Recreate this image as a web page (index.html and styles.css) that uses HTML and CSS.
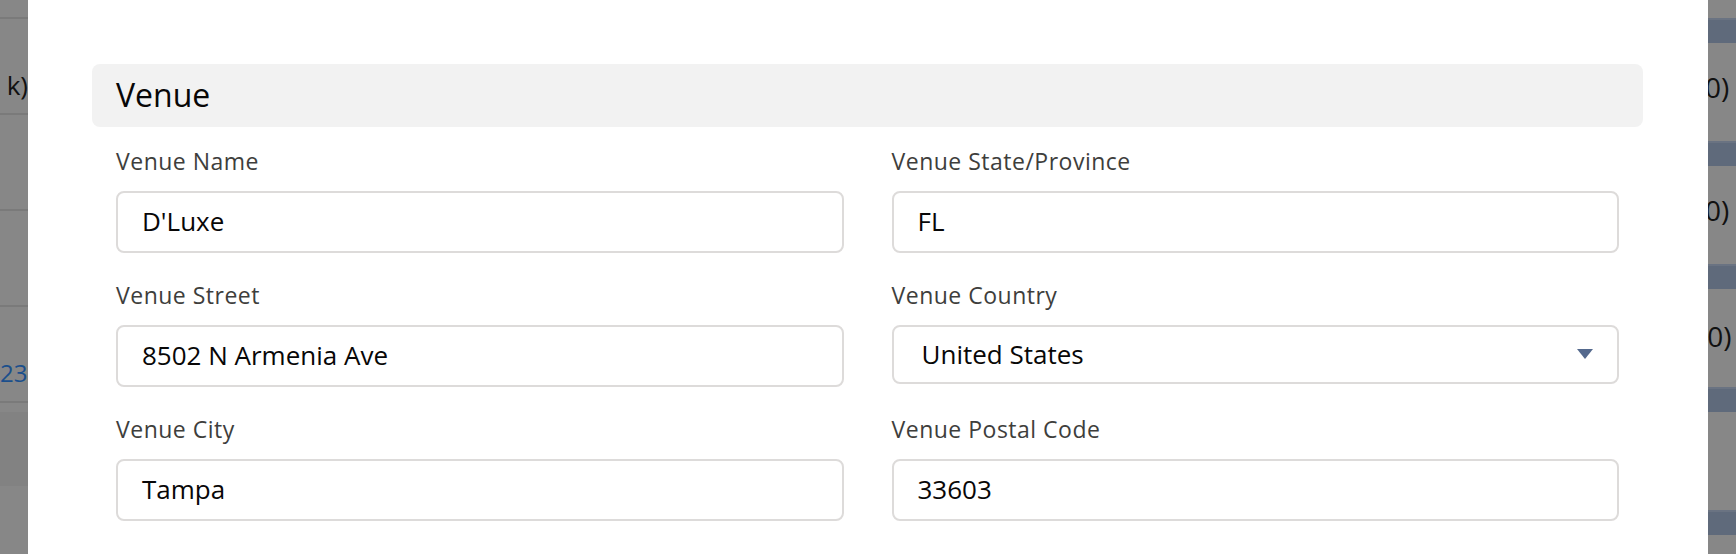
FILE: index.html
```html
<!DOCTYPE html>
<html lang="en">
<head>
<meta charset="utf-8">
<title>Venue</title>
<link rel="stylesheet" href="styles.css">
</head>
<body>
<div class="screen">
  <div class="bg-left">
    <div class="lrow lrow-top"></div>
    <div class="lrow lrow-text"><span class="ltext">k)</span></div>
    <div class="lrow"></div>
    <div class="lrow"></div>
    <div class="lrow lrow-text"><span class="ltext link">23.4</span></div>
    <div class="lrow-gap"></div>
    <div class="lrow-dark"></div>
    <div class="lrow-last"></div>
  </div>

  <main class="modal">
    <section class="section">
      <h2 class="section-title">Venue</h2>
      <div class="grid">
        <div class="field">
          <label class="label">Venue Name</label>
          <div class="input">D'Luxe</div>
        </div>
        <div class="field">
          <label class="label">Venue State/Province</label>
          <div class="input">FL</div>
        </div>
        <div class="field">
          <label class="label">Venue Street</label>
          <div class="input">8502 N Armenia Ave</div>
        </div>
        <div class="field">
          <label class="label">Venue Country</label>
          <div class="input select">
            <span>United States</span>
            <svg class="caret" width="16" height="10" viewBox="0 0 16 10"><path d="M0 0 H16 L8 10 Z" fill="#54698d"/></svg>
          </div>
        </div>
        <div class="field">
          <label class="label">Venue City</label>
          <div class="input">Tampa</div>
        </div>
        <div class="field">
          <label class="label">Venue Postal Code</label>
          <div class="input">33603</div>
        </div>
      </div>
    </section>
  </main>

  <div class="bg-right">
    <div class="rgap rgap-top"></div>
    <div class="rband"></div>
    <div class="rgap"><span class="rtext">0)</span></div>
    <div class="rband"></div>
    <div class="rgap"><span class="rtext">0)</span></div>
    <div class="rband"></div>
    <div class="rgap"><span class="rtext">(0)</span></div>
    <div class="rband"></div>
    <div class="rgap"></div>
    <div class="rband"></div>
    <div class="rgap"></div>
  </div>
</div>
</body>
</html>
```
FILE: styles.css
```css
* { box-sizing: border-box; }
html, body {
  margin: 0;
  padding: 0;
  height: 100%;
  overflow: hidden;
}
body {
  background: #878787;
  font-family: "Open Sans", "Noto Sans", sans-serif;
}
.screen {
  display: flex;
  height: 554px;
  width: 1736px;
}

/* page behind the overlay, left side */
.bg-left {
  width: 28px;
  flex: none;
  overflow: hidden;
  display: flex;
  flex-direction: column;
  background: #878787;
}
.lrow {
  height: 96px;
  flex: none;
  border-bottom: 2px solid #7a7a7a;
  display: flex;
  align-items: center;
  white-space: nowrap;
  overflow: hidden;
}
.lrow-text { padding-top: 38px; }
.lrow-top { height: 19px; }
.lrow-gap { height: 9px; flex: none; }
.lrow-dark { height: 74px; flex: none; background: #828282; }
.lrow-last { flex: 1; }
.ltext {
  font-size: 26px;
  line-height: 30px;
  color: #111;
  margin-left: auto;
}
.ltext.link {
  margin-left: 0;
  color: #1b4f8c;
  font-size: 24px;
}

/* page behind the overlay, right side */
.bg-right {
  width: 28px;
  flex: none;
  overflow: hidden;
  display: flex;
  flex-direction: column;
  background: #878787;
}
.rgap {
  height: 98px;
  flex: none;
  display: flex;
  align-items: center;
  white-space: nowrap;
  overflow: hidden;
}
.rgap-top { height: 18px; }
.rband {
  height: 25px;
  flex: none;
  background: #5f6a7b;
  border-top: 2px solid #6a7382;
}
.rtext {
  font-size: 28px;
  color: #111;
  margin-left: -3px;
  margin-top: -10px;
}
.rgap:nth-child(7) .rtext { margin-left: -9px; margin-top: -4px; }

/* modal */
.modal {
  width: 1680px;
  flex: none;
  background: #ffffff;
  padding: 64px 65px 0 64px;
}
.section-title {
  margin: 0;
  height: 63px;
  background: #f2f2f2;
  border-radius: 8px;
  padding: 0 24px 3px;
  display: flex;
  align-items: center;
  font-size: 32px;
  font-weight: 400;
  color: #080707;
}
.grid {
  display: grid;
  grid-template-columns: 1fr 1fr;
  column-gap: 48px;
  row-gap: 27px;
  padding: 19px 24px 0;
  align-items: start;
}
.field {
  display: flex;
  flex-direction: column;
}
.label {
  font-size: 23px;
  line-height: 30px;
  letter-spacing: 0.5px;
  color: #3e3e3c;
  margin-bottom: 15px;
}
.input {
  height: 62px;
  border: 2px solid #dddbda;
  border-radius: 8px;
  background: #fff;
  padding: 0 24px 3px;
  display: flex;
  align-items: center;
  font-size: 26px;
  color: #080707;
}
.input.select {
  height: 59px;
  padding-left: 28px;
  padding-bottom: 2px;
  justify-content: space-between;
}
.caret {
  flex: none;
  display: block;
}
```
